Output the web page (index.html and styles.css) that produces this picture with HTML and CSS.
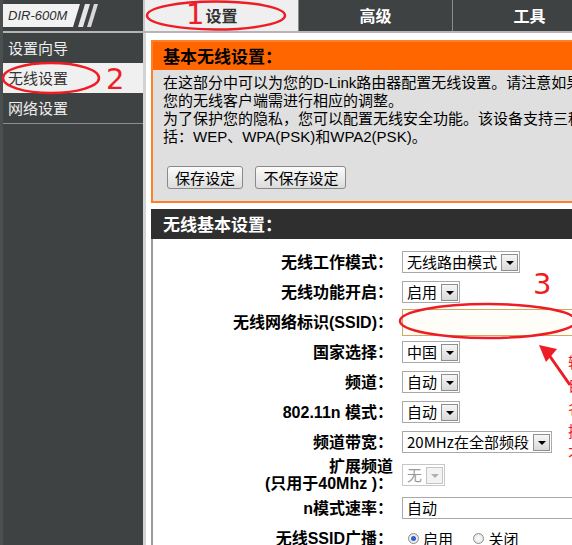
FILE: index.html
```html
<!DOCTYPE html>
<html lang="zh-CN">
<head>
  <meta charset="UTF-8" />
  <title>DIR-600M 无线设置</title>
  <link rel="stylesheet" href="styles.css">
</head>
<body>
  <div class="page">
    <div class="top">
      <div class="logo">
        <svg width="140" height="31" viewBox="0 0 140 31">
          <polygon points="0,4 77,4 70,27 0,27" fill="#f2f2f2"/>
          <polygon points="82,4 87,4 80,27 75,27" fill="#e6e6e6"/>
          <polygon points="91,4 95,4 88,27 84,27" fill="#d8d8d8"/>
          <text x="5" y="20" class="model">DIR-600M</text>
        </svg>
      </div>
      <ul class="tabs">
        <li class="tab on">设置</li>
        <li class="tab">高级</li>
        <li class="tab">工具</li>
      </ul>
    </div>

    <div class="body">
      <nav class="side">
        <a href="#">设置向导</a>
        <a href="#" class="on">无线设置</a>
        <a href="#" class="last">网络设置</a>
      </nav>

      <main class="main">
        <section class="notice">
          <h2>基本无线设置：</h2>
          <div class="txt">
            <p>在这部分中可以为您的D-Link路由器配置无线设置。请注意如果您更改了此处的设置，<br>您的无线客户端需进行相应的调整。</p>
            <p>为了保护您的隐私，您可以配置无线安全功能。该设备支持三种无线安全模式，包<br>括：WEP、WPA(PSK)和WPA2(PSK)。</p>
          </div>
          <div class="btns">
            <button>保存设定</button>
            <button>不保存设定</button>
          </div>
        </section>

        <section class="form">
          <h2>无线基本设置：</h2>
          <div class="rows">
            <label>无线工作模式：</label>
            <div><span class="sel"><span class="v">无线路由模式</span><span class="arr"></span></span></div>

            <label>无线功能开启：</label>
            <div><span class="sel"><span class="v">启用</span><span class="arr"></span></span></div>

            <label>无线网络标识(SSID)：</label>
            <div><input type="text" class="ssid"></div>

            <label>国家选择：</label>
            <div><span class="sel"><span class="v">中国</span><span class="arr"></span></span></div>

            <label>频道：</label>
            <div><span class="sel"><span class="v">自动</span><span class="arr"></span></span></div>

            <label>802.11n 模式：</label>
            <div><span class="sel"><span class="v">自动</span><span class="arr"></span></span></div>

            <label>频道带宽：</label>
            <div><span class="sel"><span class="v">20MHz在全部频段</span><span class="arr"></span></span></div>

            <label>扩展频道<br>(只用于40Mhz )：</label>
            <div><span class="sel off"><span class="v">无</span><span class="arr"></span></span></div>

            <label>n模式速率：</label>
            <div><span class="sel wide"><span class="v">自动</span></span></div>

            <label>无线SSID广播：</label>
            <div>
              <span class="radio"><span class="dot on"></span>启用</span>
              <span class="radio"><span class="dot"></span>关闭</span>
            </div>
          </div>
        </section>
      </main>
    </div>
  </div>

  <!-- 红色标注 -->
  <svg class="marks" width="572" height="545" viewBox="0 0 572 545">
    <g fill="none" stroke="#ee1c24" stroke-width="2.5">
      <ellipse cx="216" cy="15.5" rx="69" ry="14"/>
      <ellipse cx="51" cy="78" rx="48" ry="15"/>
      <ellipse cx="488" cy="321" rx="88" ry="17"/>
      <line x1="549" y1="355" x2="570" y2="385" stroke-width="3"/>
    </g>
    <polygon points="539,345 557,349 546,362" fill="#ee1c24"/>
    <g class="num">
      <text x="186" y="24">1</text>
      <text x="106" y="89">2</text>
      <text x="533" y="294">3</text>
    </g>
    <g class="note">
      <text x="568" y="368">输入无线网络名称</text>
      <text x="568" y="391">自定义即可</text>
      <text x="568" y="414">名称用于</text>
      <text x="568" y="437">搜索识别</text>
      <text x="568" y="460">不要用中文</text>
    </g>
  </svg>
</body>
</html>
```

FILE: styles.css
```css
html, body {
  margin: 0;
  overflow: hidden;
  background: #fff;
}
body {
  font-family: "Liberation Sans", "Noto Sans CJK SC", sans-serif;
  color: #000;
  position: relative;
  width: 572px;
  height: 545px;
}
.page {
  width: 760px;
  border-left: 3px solid #4c4f50;
}

/* top bar */
.top {
  display: flex;
  height: 31px;
  background: #3f4243;
  border-bottom: 2px solid #b5b5b5;
}
.logo {
  width: 140px;
  flex: none;
}
.logo svg { display: block; }
.model {
  font: italic 13px "Liberation Sans", sans-serif;
  fill: #2e2e2e;
}
.tabs {
  display: flex;
  margin: 0;
  padding: 0;
  list-style: none;
  border-left: 2px solid #c9c9c9;
}
.tab {
  width: 153px;
  text-align: center;
  font: bold 16px/31px "Noto Sans CJK SC", sans-serif;
  color: #fff;
  border-right: 1px solid #8c8c8c;
}
.tab.on {
  background: #efefef;
  color: #333;
}

/* side menu */
.body {
  display: flex;
  min-height: 520px;
}
.side {
  width: 140px;
  flex: none;
  background: #3f4243;
}
.side a {
  display: block;
  height: 30px;
  line-height: 30px;
  padding-left: 5px;
  color: #eee;
  font-size: 15px;
  font-family: "Noto Sans CJK SC", sans-serif;
  text-decoration: none;
}
.side a.on {
  background: #f0f0f0;
  color: #333;
}
.side a.last {
  border-bottom: 1px solid #8e8e8e;
}

/* content */
.main {
  flex: 1;
  border-left: 3px solid #d3d3d3;
  padding: 7px 0 0 5px;
}
h2 {
  margin: 0;
  font-family: "Noto Sans CJK SC", sans-serif;
  font-weight: bold;
  font-size: 17px;
}
.notice {
  border: 2px solid #ff7f27;
  background: #dfdfdf;
}
.notice h2 {
  background: #ff6600;
  height: 28px;
  line-height: 28px;
  padding-left: 10px;
}
.txt {
  padding: 4px 10px 0;
  font-size: 15px;
  line-height: 18px;
  white-space: nowrap;
}
.txt p { margin: 0; }
.btns {
  padding: 20px 0 12px 14px;
}
button {
  height: 23px;
  padding: 0 7px;
  margin-right: 8px;
  font: 15px "Noto Sans CJK SC", sans-serif;
  line-height: 21px;
  color: #000;
  border: 1px solid #8a8a8a;
  border-radius: 3px;
  background: linear-gradient(#fbfbfb, #dcdcdc);
}

.form { margin-top: 6px; }
.form h2 {
  background: #2f2f2f;
  color: #fff;
  height: 30px;
  line-height: 30px;
  padding-left: 12px;
}
.rows {
  display: grid;
  grid-template-columns: 240px auto;
  grid-template-rows: repeat(7, 30px) 36px 30px 30px;
  column-gap: 9px;
  align-items: center;
  border-left: 2px solid #9a9a9a;
  padding-top: 8px;
  padding-bottom: 20px;
}
.rows label {
  text-align: right;
  font-weight: bold;
  font-size: 16px;
  line-height: 17px;
  white-space: nowrap;
}

/* select look */
.sel {
  display: inline-flex;
  align-items: center;
  height: 22px;
  box-sizing: border-box;
  border: 1px solid #a9a9a9;
  background: #fff;
  font: 15px "Noto Sans CJK SC", sans-serif;
  vertical-align: middle;
}
.sel .v {
  padding: 0 4px;
  line-height: 20px;
}
.sel .arr {
  position: relative;
  width: 17px;
  height: 17px;
  margin-right: 1px;
  box-sizing: border-box;
  border: 1px solid #8f8f8f;
  background: linear-gradient(#f6f6f6, #d9d9d9);
}
.sel .arr::after {
  content: "";
  position: absolute;
  left: 4px;
  top: 6px;
  border-left: 4px solid transparent;
  border-right: 4px solid transparent;
  border-top: 4px solid #000;
}
.sel.off {
  color: #9a9a9a;
  border-color: #c7c7c7;
}
.sel.off .arr { border-color: #c4c4c4; background: #f3f3f3; }
.sel.off .arr::after { border-top-color: #b0b0b0; }
.sel.wide { width: 300px; }

.ssid {
  display: block;
  width: 200px;
  height: 27px;
  box-sizing: border-box;
  border: 1px solid #d4a65e;
  background: #fffdf7;
  margin-top: 1px;
}

.radio {
  display: inline-flex;
  align-items: center;
  gap: 4px;
  margin-left: 6px;
  margin-right: 10px;
  font: 15px "Noto Sans CJK SC", sans-serif;
}
.dot {
  position: relative;
  width: 11px;
  height: 11px;
  box-sizing: border-box;
  border-radius: 50%;
  border: 1px solid #8c8c8c;
  background: radial-gradient(#ffffff, #dcdcdc);
}
.dot.on::after {
  content: "";
  position: absolute;
  left: 2px;
  top: 2px;
  width: 5px;
  height: 5px;
  border-radius: 50%;
  background: #2a62c8;
}

/* annotations */
.marks {
  position: absolute;
  left: 0;
  top: 0;
  pointer-events: none;
}
.num text {
  font: 29px "DejaVu Sans", sans-serif;
  fill: #ee1c24;
}
.note text {
  font: 15px "Noto Sans CJK SC", sans-serif;
  fill: #ee1c24;
}
```
